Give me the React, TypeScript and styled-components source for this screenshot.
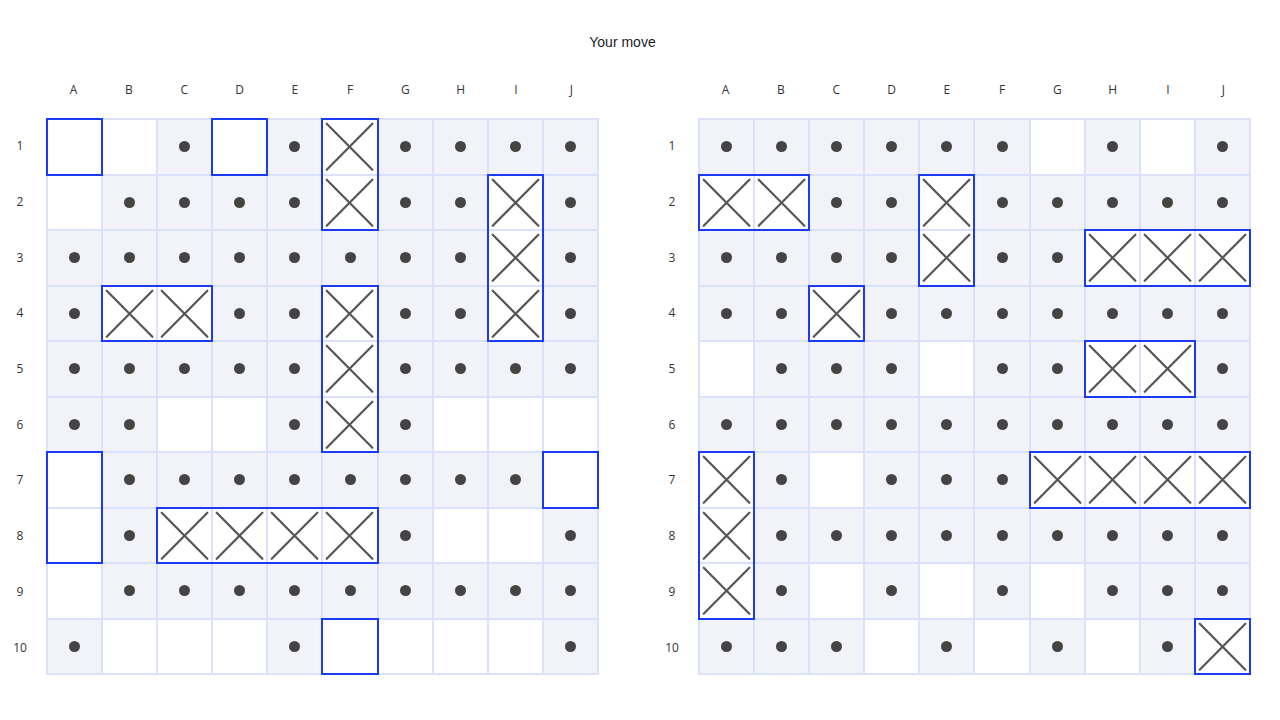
import React from 'react';
import styled, { createGlobalStyle } from 'styled-components';

const GlobalStyle = createGlobalStyle`
  html, body {
    margin: 0;
    padding: 0;
    background: #fff;
    font-family: "Open Sans", "Liberation Sans", Arial, sans-serif;
  }
`;

const LETTERS = ['A', 'B', 'C', 'D', 'E', 'F', 'G', 'H', 'I', 'J'];

// '.' miss, 'o' unknown, 'x' hit, 's' own ship not hit
const LEFT_BOARD = [
  's o . s . x . . . .',
  'o . . . . x . . x .',
  '. . . . . . . . x .',
  '. x x . . x . . x .',
  '. . . . . x . . . .',
  '. . o o . x . o o o',
  's . . . . . . . . s',
  's . x x x x . o o .',
  'o . . . . . . . . .',
  '. o o o . s o o o .',
];

const RIGHT_BOARD = [
  '. . . . . . o . o .',
  'x x . . x . . . . .',
  '. . . . x . . x x x',
  '. . x . . . . . . .',
  'o . . . o . . x x .',
  '. . . . . . . . . .',
  'x . o . . . x x x x',
  'x . . . . . . . . .',
  'x . o . o . o . . .',
  '. . . o . o . o . x',
];

type Ship = { row: number; col: number; len: number; vertical?: boolean };

const LEFT_SHIPS: Ship[] = [
  { row: 0, col: 0, len: 1 },
  { row: 0, col: 3, len: 1 },
  { row: 0, col: 5, len: 2, vertical: true },
  { row: 1, col: 8, len: 3, vertical: true },
  { row: 3, col: 1, len: 2 },
  { row: 3, col: 5, len: 3, vertical: true },
  { row: 6, col: 0, len: 2, vertical: true },
  { row: 6, col: 9, len: 1 },
  { row: 7, col: 2, len: 4 },
  { row: 9, col: 5, len: 1 },
];

const RIGHT_SHIPS: Ship[] = [
  { row: 1, col: 0, len: 2 },
  { row: 1, col: 4, len: 2, vertical: true },
  { row: 2, col: 7, len: 3 },
  { row: 3, col: 2, len: 1 },
  { row: 4, col: 7, len: 2 },
  { row: 6, col: 6, len: 4 },
  { row: 6, col: 0, len: 3, vertical: true },
  { row: 9, col: 9, len: 1 },
];

const Page = styled.div`
  width: 1245px;
  display: flex;
  flex-direction: column;
  align-items: center;
`;

const Title = styled.div`
  margin-top: 32px;
  height: 20px;
  line-height: 20px;
  font-family: "Liberation Sans", Arial, sans-serif;
  font-size: 14px;
  color: #222;
`;

const Boards = styled.div`
  margin-top: 8px;
  width: 1251px;
  align-self: flex-start;
  display: flex;
  justify-content: space-between;
`;

const Board = styled.div`
  display: flex;
  flex-direction: column;
`;

const HeaderRow = styled.div`
  display: flex;
  height: 58px;
  align-items: center;
  padding-left: 46px;
`;

const ColLabel = styled.div`
  width: 55.3px;
  text-align: center;
  font-size: 12px;
  color: #333;
`;

const BodyRow = styled.div`
  display: flex;
`;

const RowLabels = styled.div`
  width: 40px;
  margin-right: 6px;
  display: flex;
  flex-direction: column;
`;

const RowLabel = styled.div`
  height: 55.7px;
  display: flex;
  align-items: center;
  justify-content: center;
  font-size: 12px;
  color: #333;
`;

const Grid = styled.div`
  width: 553px;
  height: 557px;
  box-sizing: border-box;
  padding: 2px;
  display: grid;
  grid-template-columns: repeat(10, 1fr);
  grid-template-rows: repeat(10, 1fr);
  gap: 2px;
  background: #dbe0fb;
`;

const Cell = styled.div<{ $row: number; $col: number; $miss: boolean }>`
  grid-row: ${(p) => p.$row + 1};
  grid-column: ${(p) => p.$col + 1};
  background: ${(p) => (p.$miss ? '#f2f3f8' : '#ffffff')};
  display: flex;
  align-items: center;
  justify-content: center;
`;

const Dot = styled.span`
  width: 11px;
  height: 11px;
  border-radius: 50%;
  background: #444;
`;

const Cross = styled.svg`
  width: 100%;
  height: 100%;
  display: block;
`;

const ShipFrame = styled.div<{ $row: number; $col: number; $len: number; $vertical?: boolean }>`
  grid-row: ${(p) => `${p.$row + 1} / span ${p.$vertical ? p.$len : 1}`};
  grid-column: ${(p) => `${p.$col + 1} / span ${p.$vertical ? 1 : p.$len}`};
  margin: -2px;
  border: 2px solid #1a3af6;
  z-index: 1;
  pointer-events: none;
`;

const HitMark = () => (
  <Cross viewBox="0 0 100 100" preserveAspectRatio="none">
    <line x1="7" y1="7" x2="93" y2="93" stroke="#555" strokeWidth="2.2" vectorEffect="non-scaling-stroke" strokeLinecap="round" />
    <line x1="93" y1="7" x2="7" y2="93" stroke="#555" strokeWidth="2.2" vectorEffect="non-scaling-stroke" strokeLinecap="round" />
  </Cross>
);

const GameBoard: React.FC<{ rows: string[]; ships: Ship[] }> = ({ rows, ships }) => (
  <Board>
    <HeaderRow>
      {LETTERS.map((l) => (
        <ColLabel key={l}>{l}</ColLabel>
      ))}
    </HeaderRow>
    <BodyRow>
      <RowLabels>
        {rows.map((_, i) => (
          <RowLabel key={i}>{i + 1}</RowLabel>
        ))}
      </RowLabels>
      <Grid>
        {rows.map((line, r) =>
          line.split(' ').map((ch, c) => (
            <Cell key={`${r}-${c}`} $row={r} $col={c} $miss={ch === '.'}>
              {ch === '.' && <Dot />}
              {ch === 'x' && <HitMark />}
            </Cell>
          ))
        )}
        {ships.map((s, i) => (
          <ShipFrame key={i} $row={s.row} $col={s.col} $len={s.len} $vertical={s.vertical} />
        ))}
      </Grid>
    </BodyRow>
  </Board>
);

const App: React.FC = () => {
  return (
    <>
      <GlobalStyle />
      <Page>
        <Title>Your move</Title>
        <Boards>
          <GameBoard rows={LEFT_BOARD} ships={LEFT_SHIPS} />
          <GameBoard rows={RIGHT_BOARD} ships={RIGHT_SHIPS} />
        </Boards>
      </Page>
    </>
  );
};

export default App;
